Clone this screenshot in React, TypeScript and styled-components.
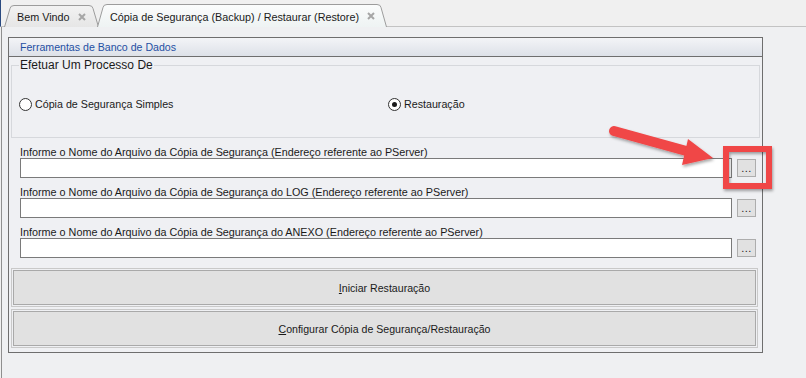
import React from "react";
import styled, { createGlobalStyle } from "styled-components";

const Global = createGlobalStyle`
  html, body { margin: 0; padding: 0; background: #f0f0f0; }
  body { font-family: "Liberation Sans", Arial, sans-serif; }
`;

const Screen = styled.div`
  position: relative;
  width: 806px;
  height: 378px;
  overflow: hidden;
  background: #f0f0f0;
  display: flex;
  flex-direction: column;
`;

const TabStrip = styled.div`
  height: 26px;
  flex: none;
  border-bottom: 1px solid #c3c3c3;
  border-left: 1px solid #2a4a80;
  display: flex;
  align-items: flex-end;
  padding-left: 3px;
`;

const TabWrap = styled.div<{ $w: number; $h: number; $shift: number }>`
  position: relative;
  width: ${(p) => p.$w}px;
  height: ${(p) => p.$h}px;
  margin-left: ${(p) => p.$shift}px;
  margin-bottom: -1px;
  flex: none;
  display: flex;
  align-items: center;
  padding-left: 13px;
  box-sizing: border-box;
  gap: 8px;
  font-size: 10.8px;
  color: #1a1a1a;
`;

const TabShape = styled.svg`
  position: absolute;
  left: 0;
  top: 0;
  z-index: 0;
`;

const TabLabel = styled.span<{ $pad: number }>`
  position: relative;
  z-index: 1;
  padding-top: ${(p) => p.$pad}px;
  white-space: nowrap;
`;

const CloseX = styled.svg`
  position: relative;
  z-index: 1;
  flex: none;
`;

const Content = styled.div`
  flex: 1;
  margin-left: 1px;
  border-left: 1px solid #8f8f8f;
  background: #eff0f2;
  padding: 10px 0 0 6px;
`;

const Panel = styled.div`
  width: 753px;
  border: 1px solid #6e6e6e;
  background: #eff0f3;
`;

const PanelHeader = styled.div`
  height: 18px;
  border-bottom: 1px solid #6e6e6e;
  background: linear-gradient(#f3f4f7, #dde1e8);
  color: #1f4fa3;
  font-size: 10.6px;
  line-height: 19px;
  padding-left: 11px;
`;

const PanelBody = styled.div`
  padding: 1px 2px 4px 2px;
`;

const Group = styled.fieldset`
  margin: 0;
  padding: 24px 7px 26px 7px;
  border: 1px solid #d6d8dc;
  min-width: 0;
`;

const Legend = styled.legend`
  padding: 0 1px;
  font-size: 12px;
  line-height: 15px;
  color: #1a1a1a;
`;

const RadioRow = styled.div`
  display: grid;
  grid-template-columns: 369px 1fr;
  height: 14px;
  align-items: center;
`;

const RadioItem = styled.label`
  display: flex;
  align-items: center;
  gap: 3px;
  font-size: 10.7px;
  color: #1a1a1a;
`;

const RadioDot = styled.span<{ $on?: boolean }>`
  width: 11px;
  height: 11px;
  border: 1px solid #333;
  border-radius: 50%;
  background: #fff;
  display: flex;
  align-items: center;
  justify-content: center;
  &::after {
    content: "";
    width: 5px;
    height: 5px;
    border-radius: 50%;
    background: ${(p) => (p.$on ? "#1a1a1a" : "transparent")};
  }
`;

const Fields = styled.div`
  padding-left: 9px;
  display: flex;
  flex-direction: column;
`;

const FieldLabel = styled.div`
  height: 20px;
  box-sizing: border-box;
  padding-top: 8px;
  font-size: 10.8px;
  line-height: 12px;
  color: #1a1a1a;
  white-space: nowrap;
`;

const FieldRow = styled.div`
  display: grid;
  grid-template-columns: 712px 19px;
  column-gap: 5px;
  align-items: center;
  height: 20px;
`;

const TextBox = styled.div`
  height: 20px;
  box-sizing: border-box;
  border: 1px solid #7a7a7a;
  background: #fff;
`;

const Browse = styled.div`
  height: 18px;
  box-sizing: border-box;
  border: 1px solid #adadad;
  background: #e1e1e1;
  font-size: 11px;
  color: #1a1a1a;
  display: flex;
  justify-content: center;
  align-items: flex-end;
  line-height: 12px;
  padding-bottom: 2px;
  letter-spacing: 0.5px;
`;

const Actions = styled.div`
  margin-top: 10px;
  display: flex;
  flex-direction: column;
  gap: 2px;
`;

const ActionOuter = styled.div`
  height: 39px;
  box-sizing: border-box;
  border: 1px solid #c9c9c9;
  padding: 1px;
  width: 747px;
`;

const ActionButton = styled.div`
  height: 100%;
  box-sizing: border-box;
  border: 1px solid #a9a9a9;
  background: #e1e1e1;
  display: flex;
  align-items: center;
  justify-content: center;
  font-size: 10.6px;
  color: #1a1a1a;
`;

const Overlay = styled.svg`
  position: absolute;
  left: 0;
  top: 0;
  pointer-events: none;
`;

function Tab({
  width,
  height,
  shift,
  selected,
  label,
}: {
  width: number;
  height: number;
  shift: number;
  selected?: boolean;
  label: string;
}) {
  const s = 6;
  const d = `M0.5 ${height} L${s} 3.5 Q${s + 0.5} 0.5 ${s + 4} 0.5 L${width - s - 4} 0.5 Q${width - s - 0.5} 0.5 ${width - s} 3.5 L${width - 0.5} ${height}`;
  const id = selected ? "tsel" : "tun";
  return (
    <TabWrap $w={width} $h={height} $shift={shift} style={{ zIndex: selected ? 2 : 1 }}>
      <TabShape width={width} height={height}>
        <defs>
          <linearGradient id={id} x1="0" y1="0" x2="0" y2="1">
            <stop offset="0" stopColor={selected ? "#fbfcfc" : "#f2f2f2"} />
            <stop offset="1" stopColor={selected ? "#eef3f3" : "#e6e6e6"} />
          </linearGradient>
        </defs>
        <path d={d + " Z"} fill={`url(#${id})`} stroke="none" />
        <path d={d} fill="none" stroke="#9c9c9c" strokeWidth="1" />
      </TabShape>
      <TabLabel $pad={selected ? 2 : 1}>{label}</TabLabel>
      <CloseX width="8" height="8" viewBox="0 0 8 8" style={{ marginTop: selected ? 1 : 2 }}>
        <path d="M1 1 L7 7 M7 1 L1 7" stroke="#a6a6a6" strokeWidth="2" />
      </CloseX>
    </TabWrap>
  );
}

function Field({ label }: { label: string }) {
  return (
    <>
      <FieldLabel>{label}</FieldLabel>
      <FieldRow>
        <TextBox />
        <Browse>...</Browse>
      </FieldRow>
    </>
  );
}

export default function App() {
  return (
    <>
      <Global />
      <Screen>
        <TabStrip>
          <Tab width={95} height={22} shift={0} label="Bem Vindo" />
          <Tab width={290} height={23} shift={-2} selected label="Cópia de Segurança (Backup) / Restaurar (Restore)" />
        </TabStrip>
        <Content>
          <Panel>
            <PanelHeader>Ferramentas de Banco de Dados</PanelHeader>
            <PanelBody>
              <Group>
                <Legend>Efetuar Um Processo De</Legend>
                <RadioRow>
                  <RadioItem>
                    <RadioDot />
                    Cópia de Segurança Simples
                  </RadioItem>
                  <RadioItem>
                    <RadioDot $on />
                    Restauração
                  </RadioItem>
                </RadioRow>
              </Group>
              <Fields>
                <Field label="Informe o Nome do Arquivo da Cópia de Segurança (Endereço referente ao PServer)" />
                <Field label="Informe o Nome do Arquivo da Cópia de Segurança do LOG (Endereço referente ao PServer)" />
                <Field label="Informe o Nome do Arquivo da Cópia de Segurança do ANEXO (Endereço referente ao PServer)" />
              </Fields>
              <Actions>
                <ActionOuter>
                  <ActionButton>
                    <span>
                      <u>I</u>niciar Restauração
                    </span>
                  </ActionButton>
                </ActionOuter>
                <ActionOuter>
                  <ActionButton>
                    <span>
                      <u>C</u>onfigurar Cópia de Segurança/Restauração
                    </span>
                  </ActionButton>
                </ActionOuter>
              </Actions>
            </PanelBody>
          </Panel>
        </Content>
        <Overlay width="806" height="378" viewBox="0 0 806 378">
          <defs>
            <filter id="sh" x="-20%" y="-20%" width="140%" height="140%">
              <feDropShadow dx="1" dy="2" stdDeviation="1.5" floodColor="#000" floodOpacity="0.35" />
            </filter>
          </defs>
          <g filter="url(#sh)">
            <line x1="614" y1="131" x2="690" y2="152" stroke="#f04646" strokeWidth="10" strokeLinecap="round" />
            <polygon points="688,139 713,158 682,165" fill="#f04646" />
            <rect x="726" y="149" width="43" height="37" fill="none" stroke="#f04646" strokeWidth="6" />
          </g>
        </Overlay>
      </Screen>
    </>
  );
}
